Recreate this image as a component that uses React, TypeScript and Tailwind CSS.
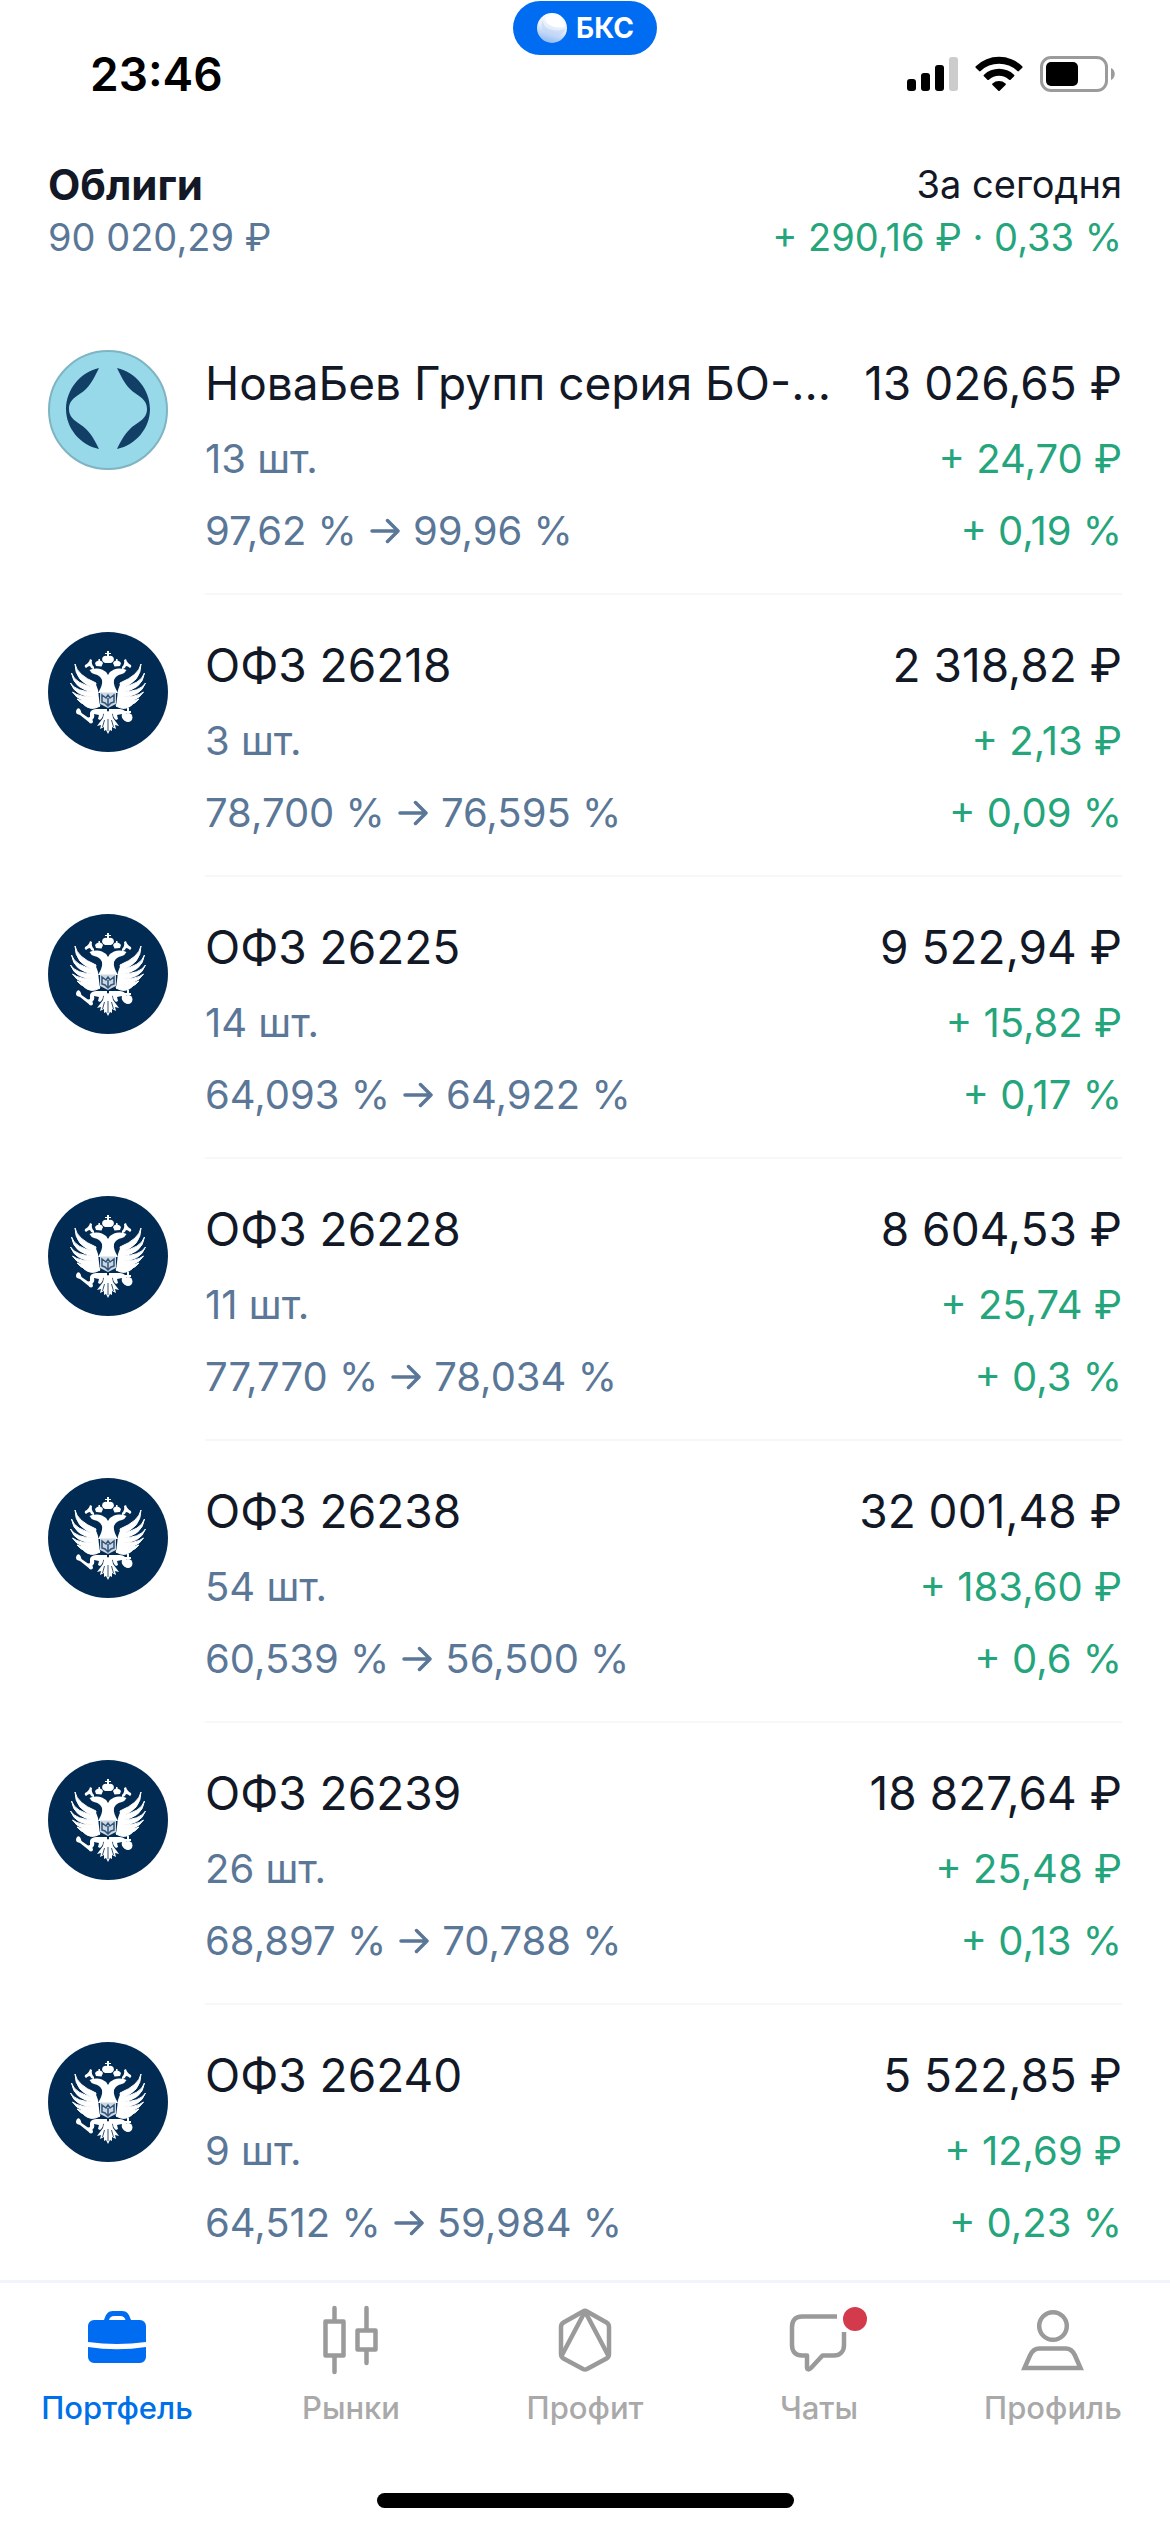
import type { ReactNode } from "react";

type Holding = {
  name: string;
  count: string;
  from: string;
  to: string;
  value: string;
  gain: string;
  percent: string;
  logo: "nova" | "eagle";
};

const holdings: Holding[] = [
  { name: "НоваБев Групп серия БО-...", count: "13 шт.", from: "97,62 %", to: "99,96 %", value: "13 026,65 ₽", gain: "+ 24,70 ₽", percent: "+ 0,19 %", logo: "nova" },
  { name: "ОФЗ 26218", count: "3 шт.", from: "78,700 %", to: "76,595 %", value: "2 318,82 ₽", gain: "+ 2,13 ₽", percent: "+ 0,09 %", logo: "eagle" },
  { name: "ОФЗ 26225", count: "14 шт.", from: "64,093 %", to: "64,922 %", value: "9 522,94 ₽", gain: "+ 15,82 ₽", percent: "+ 0,17 %", logo: "eagle" },
  { name: "ОФЗ 26228", count: "11 шт.", from: "77,770 %", to: "78,034 %", value: "8 604,53 ₽", gain: "+ 25,74 ₽", percent: "+ 0,3 %", logo: "eagle" },
  { name: "ОФЗ 26238", count: "54 шт.", from: "60,539 %", to: "56,500 %", value: "32 001,48 ₽", gain: "+ 183,60 ₽", percent: "+ 0,6 %", logo: "eagle" },
  { name: "ОФЗ 26239", count: "26 шт.", from: "68,897 %", to: "70,788 %", value: "18 827,64 ₽", gain: "+ 25,48 ₽", percent: "+ 0,13 %", logo: "eagle" },
  { name: "ОФЗ 26240", count: "9 шт.", from: "64,512 %", to: "59,984 %", value: "5 522,85 ₽", gain: "+ 12,69 ₽", percent: "+ 0,23 %", logo: "eagle" },
];

function NovaLogo() {
  return (
    <svg viewBox="0 0 120 120" className="size-[120px] shrink-0" aria-hidden="true">
      <circle cx="60" cy="60" r="59" fill="#98d9e9" stroke="#7fb4c2" strokeWidth="2" />
      <g fill="#123f66">
        <path d="M51 18C32 22 18 40 18 59s14 36 33 40C47 91 44 85 38 79 31 72 21 70 21 59s10-13 17-20C44 33 47 26 51 18z" />
        <path d="M69 18c19 4 33 22 33 41s-14 36-33 40c4-8 7-14 13-20 7-7 17-9 17-20s-10-13-17-20c-6-6-9-13-13-21z" />
      </g>
    </svg>
  );
}

function EagleHalf() {
  return (
    <>
      <g stroke="#fff" strokeWidth="1" strokeLinejoin="round">
        <path d="M27 32Q29 43 48 51L47 56Q27 50 27 32z" />
        <path d="M23.500 41Q27 52 47 55.500V60Q26 58 23.500 41z" />
        <path d="M22.500 51Q28 60 47 60L48 64Q28 66 22.500 51z" />
        <path d="M24.500 60Q32 66 48 64L49 68Q32 72 24.500 60z" />
        <path d="M29 67Q36 70.500 49 67L50 71Q37 77 29 67z" />
        <path d="M35.500 72.500Q42 74 50 70L52 74Q43 79.500 35.500 72.500z" />
      </g>
      <path d="M42 48Q48 50 50 58L52 75 45 72z" />
      <path d="M41.500 38Q48 35.500 54 37.500 58 39 60 43V61H50Q55 53 54 48 52 43 46 42 43 41 41.500 38z" />
      <path d="M48 34l-1-3q1-2 3.500-2.500V27h1.500v1.500Q54.500 29 55 31l-1.500 3.500z" />
      <path d="M46 35q-3-3-2-7l-2-1q-1 4-5 6-1 2 1 3 2-2 4-2 1 3 4 3z" />
      <path d="M50 77h9v4l-4 1c0 3-1 4-3 6l-2-1 1-4-5-1c1 4-1 5-3 7l-4-3 3-1v-4c1-3 3-4 8-4z" />
      <path d="M60 79l-4 2-1 5-6 8 4-1-1 4 4-2v4l2-1 2 4z" />
    </>
  );
}

function EagleLogo() {
  return (
    <svg viewBox="0 0 120 120" className="size-[120px] shrink-0" aria-hidden="true">
      <circle cx="60" cy="60" r="60" fill="#022b54" />
      <g fill="#fff">
        <EagleHalf />
        <g transform="translate(120 0) scale(-1 1)">
          <EagleHalf />
        </g>
        <path d="M57 31q-4-2-2.500-5.500Q56 23 59 24v-2h-2v-1h2v-2h2v2h2v1h-2v2q3-1 4.500 1.500Q67 29 63 31z" />
        <path d="M29 77q2-2 3.500 1l1 3 10 7-1.500 3-10-8-3-1q-2-2 0-5z" />
        <circle cx="43" cy="89.500" r="2" />
        <circle cx="80" cy="85.500" r="4.500" />
        <path d="M79 76h2v3h2v2h-6v-2h2z" />
      </g>
      <path d="M52 60.500h16V72l-8 4-8-4z" fill="#cdd7e2" />
      <path d="M54 63l4 3 2-3 2 3 4-3v7l-3 1-3 3-3-3-3-1zM60 66v7" fill="none" stroke="#31557b" strokeWidth="1.500" />
      <path d="M60 87v12M56.500 88l-2 7M63.500 88l2 7" stroke="#022b54" strokeWidth="0.800" />
    </svg>
  );
}

function Arrow() {
  return (
    <svg viewBox="0 0 30 30" className="mx-[13px] size-[30px] shrink-0" fill="none" stroke="currentColor" strokeWidth="3.500" strokeLinecap="round" strokeLinejoin="round" role="img" aria-label="стало">
      <path d="M2 15h26M17.500 4.500L28 15 17.500 25.500" />
    </svg>
  );
}

function HoldingRow({ item, last }: { item: Holding; last: boolean }) {
  return (
    <li className="flex gap-[37px] px-12">
      <div className="pt-[37px]">{item.logo === "nova" ? <NovaLogo /> : <EagleLogo />}</div>
      <div className={`min-w-0 flex-1 pt-10 ${last ? "pb-[27px]" : "border-b-2 border-[#f6f7f9] pb-8"}`}>
        <div className="flex items-center justify-between gap-4 text-[46px] leading-[60px] text-[#121826]">
          <h2 className="min-w-0 truncate">{item.name}</h2>
          <span className="shrink-0">{item.value}</span>
        </div>
        <div className="mt-4 flex items-center justify-between text-[40px] leading-[60px]">
          <span className="text-[#5b7797]">{item.count}</span>
          <span className="text-[#25a57c]">{item.gain}</span>
        </div>
        <div className="mt-3 flex items-center justify-between text-[40px] leading-[60px]">
          <span className="flex items-center text-[#5b7797]">
            {item.from}
            <Arrow />
            {item.to}
          </span>
          <span className="text-[#25a57c]">{item.percent}</span>
        </div>
      </div>
    </li>
  );
}

function StatusBar() {
  return (
    <div className="relative flex h-[144px] items-center justify-between pl-[90px] pr-[54px] text-black">
      <time className="pt-1 text-[46px] leading-[60px] font-semibold">23:46</time>
      <button type="button" className="absolute top-px left-1/2 flex h-[54px] w-[144px] -translate-x-1/2 items-center justify-center gap-2 rounded-full bg-[#006cf2] text-[28px] leading-none font-bold text-white">
        <svg viewBox="0 0 32 32" className="size-8" aria-hidden="true">
          <defs>
            <linearGradient id="ball" x1="0.6" y1="0" x2="0.3" y2="1">
              <stop offset="0" stopColor="#ffffff" />
              <stop offset="0.5" stopColor="#e4edfb" />
              <stop offset="1" stopColor="#8bb6f2" />
            </linearGradient>
          </defs>
          <circle cx="16" cy="16" r="15" fill="url(#ball)" />
          <path d="M7 8c0 9 10 13 22 9-2 8-14 10-20 4-4-4-4-9-2-13z" fill="#bfd5f5" opacity="0.6" />
          <path d="M9 7c2 6 9 10 20 8C28 5 16-1 9 7z" fill="#fff" />
        </svg>
        БКС
      </button>
      <div className="flex items-center gap-[17px] pt-1">
        <svg viewBox="0 0 51 36" className="h-9 w-[51px]" aria-label="Сигнал сети" role="img">
          <rect x="0" y="23" width="9" height="12" rx="3" />
          <rect x="14" y="17" width="9" height="18" rx="3" />
          <rect x="28" y="9" width="9" height="26" rx="3" />
          <rect x="42" y="1" width="9" height="34" rx="3" fill="#cccccc" />
        </svg>
        <svg viewBox="0 0 48 36" className="h-9 w-12" aria-label="Wi-Fi" role="img">
          <path d="M0.8 10.2a33.5 33.5 0 0 1 46.4 0c.6.6.6 1 .1 1.5l-3.400 3.400c-.5.5-1 .5-1.500 0a26.500 26.500 0 0 0-36.800 0c-.5.5-1 .5-1.500 0L.7 11.700c-.5-.5-.5-.9.1-1.500z" />
          <path d="M9 18.700a22 22 0 0 1 30 0c.6.5.6 1 .1 1.500l-3.500 3.500c-.5.5-1 .5-1.500 0a15 15 0 0 0-20.200 0c-.5.5-1 .5-1.500 0l-3.500-3.500c-.5-.5-.5-1 .1-1.500z" />
          <path d="M17.500 27.400a10 10 0 0 1 13 0c.5.4.5 1 0 1.500L24.700 34.700c-.5.5-.9.5-1.400 0L17.500 28.900c-.5-.5-.5-1.100 0-1.500z" />
        </svg>
        <svg viewBox="0 0 76 36" className="h-9 w-[76px]" aria-label="Батарея" role="img">
          <rect x="1.500" y="1.500" width="65" height="33" rx="9.500" fill="none" stroke="#9b9b9b" strokeWidth="3" />
          <rect x="6" y="6" width="32" height="24" rx="5" />
          <path d="M71 12c5 2 5 10 0 12z" fill="#9b9b9b" />
        </svg>
      </div>
    </div>
  );
}

function TabIcon({ children }: { children: ReactNode }) {
  return (
    <svg viewBox="0 0 72 72" className="size-[72px] overflow-visible" fill="none" stroke="#9a9a9a" strokeWidth="4.500" aria-hidden="true">
      {children}
    </svg>
  );
}

const tabs: { label: string; active?: boolean; icon: ReactNode }[] = [
  {
    label: "Портфель",
    active: true,
    icon: (
      <g fill="#006cf2" stroke="none">
        <path d="M7 38V22a6 6 0 0 1 6-6h10c2-6 4-9 9-9h9c5 0 7 3 9 9h9a6 6 0 0 1 6 6v16Q36 42 7 38zM28 16h16.500c-1-3-2.500-4-5-4h-6.500c-2.500 0-4 1-5 4z" fillRule="evenodd" />
        <path d="M7 43Q36 47.500 65 43v10a6 6 0 0 1-6 6H13a6 6 0 0 1-6-6z" />
      </g>
    ),
  },
  {
    label: "Рынки",
    icon: (
      <g strokeLinecap="round" strokeLinejoin="round">
        <path d="M10.500 17.500h18v34h-18zM19.500 4v13M19.500 52v16" />
        <path d="M42.500 26.500h18v19h-18zM51.500 4v22M51.500 46v13" />
      </g>
    ),
  },
  {
    label: "Профит",
    icon: (
      <g strokeLinejoin="round">
        <path d="M34 7.500q2-1.500 4 0L57.500 18.500q2.500 1.500 2.500 4.500v27q0 3-2.500 4.500L38 65q-2 1-4 0L14.500 54.500Q12 53 12 50V23q0-3 2.500-4.500z" />
        <path d="M12.500 52L36 7.500 59.500 52" />
      </g>
    ),
  },
  {
    label: "Чаты",
    icon: (
      <>
        <path d="M54 12.500H19C12 12.500 9 17 9 23v18c0 7 4 10.500 10 10.500h5V63c0 3 2 3 4 1l11.500-12.500H51c6 0 10-4 10-10.500V28" strokeLinejoin="round" />
        <circle cx="72" cy="15" r="12" fill="#d33b4d" stroke="none" />
      </>
    ),
  },
  {
    label: "Профиль",
    icon: (
      <>
        <circle cx="36" cy="22" r="13.800" />
        <path d="M7.500 64L13 51.500Q16 44.500 22.500 44.500h26q6.500 0 9.500 7L63.500 64z" />
      </>
    ),
  },
];

function TabBar() {
  return (
    <nav className="mt-auto border-t-3 border-[#f1f4fa] pt-[21px]">
      <ul className="grid grid-cols-5">
        {tabs.map((tab) => (
          <li key={tab.label}>
            <button type="button" aria-current={tab.active ? "page" : undefined} className={`flex w-full flex-col items-center gap-[13px] text-[31px] leading-[38px] font-medium ${tab.active ? "text-[#0070e8]" : "text-[#a9a9a9]"}`}>
              <TabIcon>{tab.icon}</TabIcon>
              {tab.label}
            </button>
          </li>
        ))}
      </ul>
      <div className="mx-auto mt-[66px] mb-6 h-[15px] w-[417px] rounded-full bg-black" />
    </nav>
  );
}

export default function App() {
  return (
    <div className="flex min-h-screen flex-col bg-white font-['Inter',sans-serif]">
      <StatusBar />
      <header className="flex items-center justify-between px-12 pt-[14px] text-[38px] leading-[53px]">
        <div>
          <h1 className="text-[42px] font-bold text-[#121826]">Облиги</h1>
          <p className="text-[#5b7797]">90 020,29 ₽</p>
        </div>
        <div className="text-right">
          <p className="text-[#121826]">За сегодня</p>
          <p className="text-[#25a57c]">+ 290,16 ₽ · 0,33 %</p>
        </div>
      </header>
      <main className="pt-[49px]">
        <ul>
          {holdings.map((item, index) => (
            <HoldingRow key={item.name} item={item} last={index === holdings.length - 1} />
          ))}
        </ul>
      </main>
      <TabBar />
    </div>
  );
}
